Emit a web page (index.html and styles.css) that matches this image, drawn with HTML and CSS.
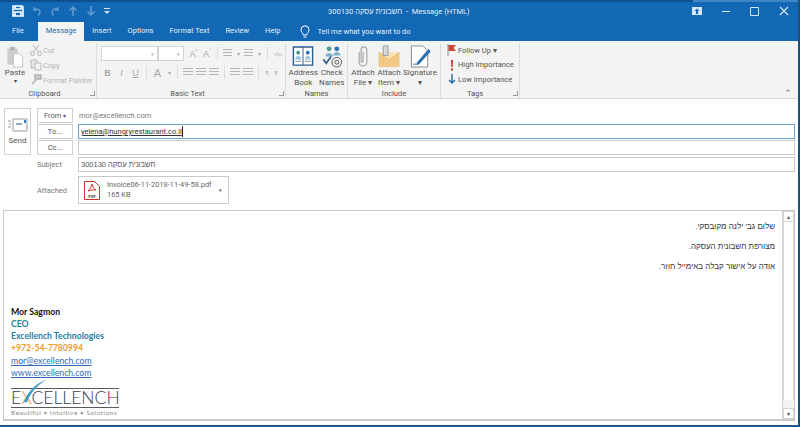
FILE: index.html
```html
<!DOCTYPE html>
<html lang="en">
<head>
    <meta charset="UTF-8">
    <title>Message (HTML)</title>
    <link rel="stylesheet" href="styles.css">
</head>
<body>
    <div class="window">
        <div class="titlebar">
            <div class="qat">
                <svg width="14" height="14" viewBox="0 0 14 14"><path d="M2 2h9l1 1v9H2z M4 2v3h6V2 M4 12V8h6v4" fill="none" stroke="#fff" stroke-width="1.6"/></svg>
                <svg class="dim" width="12" height="12" viewBox="0 0 12 12"><path d="M3 2v3h3M3 5c2-2 6-1 6 2 0 2-1 3-2 3" fill="none" stroke="#fff" stroke-width="1.3"/></svg>
                <svg class="dim" width="12" height="12" viewBox="0 0 12 12"><path d="M9 2v3H6M9 5C7 3 3 4 3 7c0 2 1 3 2 3" fill="none" stroke="#fff" stroke-width="1.3"/></svg>
                <svg class="dim" width="12" height="12" viewBox="0 0 12 12"><path d="M6 11V2M2.500 5.500 6 2l3.500 3.500" fill="none" stroke="#fff" stroke-width="1.500"/></svg>
                <svg class="dim" width="12" height="12" viewBox="0 0 12 12"><path d="M6 1v9M2.500 6.500 6 10l3.500-3.500" fill="none" stroke="#fff" stroke-width="1.500"/></svg>
                <svg class="more" width="8" height="12" viewBox="0 0 8 12"><path d="M1 3h6v1H1zM1 6h6L4 9z" fill="#cfe0f0"/></svg>
            </div>
            <div class="doc-title"><span dir="rtl">חשבונית עסקה 300130</span> &nbsp;-&nbsp; Message (HTML)</div>
            <div class="win-btns">
                <svg width="10" height="8" viewBox="0 0 10 8"><path d="M0 0h10v8H0z" fill="#d5e5f5"/><path d="M5 1.500 2.500 4H4v3h2V4h1.500z" fill="#1268b5"/></svg>
                <svg width="10" height="8" viewBox="0 0 10 8"><path d="M1 4.500h8" stroke="#d5e5f5"/></svg>
                <svg width="10" height="10" viewBox="0 0 10 10"><path d="M.5 1.500h8v8h-8z" fill="none" stroke="#d5e5f5"/></svg>
                <svg width="10" height="10" viewBox="0 0 10 10"><path d="M1 1l8 8M9 1l-8 8" stroke="#d5e5f5" stroke-width="1.100"/></svg>
            </div>
        </div>
        <div class="tabs">
            <span class="tab">File</span>
            <span class="tab active">Message</span>
            <span class="tab">Insert</span>
            <span class="tab">Options</span>
            <span class="tab">Format Text</span>
            <span class="tab">Review</span>
            <span class="tab">Help</span>
            <span class="tell">
                <svg width="10" height="14" viewBox="0 0 10 14"><path d="M3.300 10C3 8 1 7 1 4.800a4 4 0 0 1 8 0C9 7 7 8 6.700 10zM3.500 12h3" fill="none" stroke="#fff"/></svg>
                Tell me what you want to do
            </span>
        </div>

        <div class="ribbon">
            <div class="group clipboard">
                <div class="group-body clip-body">
                    <div class="paste">
                        <svg width="18" height="22" viewBox="0 0 20 26"><path d="M1 3h12v19H1z" fill="#cfcdcb"/><path d="M4 1h6v4H4z" fill="#b5b3b1"/><path d="M8 9h7l4 4v12H8z" fill="#fff" stroke="#b9b9b9"/></svg>
                        <span class="big-label dark">Paste</span>
                        <span class="caret dark">▾</span>
                    </div>
                    <div class="clip-list">
                        <span class="clip-item"><svg width="12" height="12" viewBox="0 0 12 12"><path d="M3 1l6 7M9 1 3 8" stroke="#b5b5b5"/><circle cx="2.500" cy="9.500" r="2" fill="none" stroke="#b5b5b5"/><circle cx="9.500" cy="9.500" r="2" fill="none" stroke="#b5b5b5"/></svg>Cut</span>
                        <span class="clip-item"><svg width="12" height="12" viewBox="0 0 12 12"><path d="M1 1h6v8H1z" fill="#e4e4e4" stroke="#bbb"/><path d="M5 4h6v7H5z" fill="#f3f3f3" stroke="#bbb"/></svg>Copy</span>
                        <span class="clip-item"><svg width="12" height="12" viewBox="0 0 12 12"><path d="M5 1h6v4H5zM7 5 2 10" stroke="#b5b5b5" stroke-width="1.600" fill="#ccc"/></svg>Format Painter</span>
                    </div>
                </div>
                <div class="group-label">Clipboard<i class="launcher"></i></div>
            </div>

            <div class="group basic">
                <div class="group-body basic-body">
                    <div class="basic-row">
                        <span class="combo font-name"><b>▾</b></span><span class="combo font-size"><b>▾</b></span>
                        <span class="tool">A<sup>^</sup></span><span class="tool">A<sup>ˇ</sup></span>
                        <span class="sep"></span>
                        <span class="tool lines"></span><span class="tool small">▾</span><span class="tool lines"></span><span class="tool small">▾</span>
                        <span class="sep"></span>
                        <span class="tool small ghost">Ap</span>
                    </div>
                    <div class="basic-row">
                        <span class="tool bold">B</span><span class="tool ital">I</span><span class="tool under">U</span>
                        <span class="sep"></span>
                        <span class="tool big">A</span><span class="tool small">▾</span>
                        <span class="sep"></span>
                        <span class="tool lines"></span><span class="tool lines"></span><span class="tool lines"></span>
                        <span class="sep"></span>
                        <span class="tool lines"></span><span class="tool lines"></span>
                        <span class="sep"></span>
                        <span class="tool small">¶</span><span class="tool small">¶</span>
                    </div>
                </div>
                <div class="group-label">Basic Text<i class="launcher"></i></div>
            </div>

            <div class="group names">
                <div class="group-body big-row">
                    <div class="big-btn">
                        <svg width="24" height="24" viewBox="0 0 24 24"><path d="M2 2h20v19H2z" fill="#fff" stroke="#2c5f93" stroke-width="1.500"/><path d="M12 2v19" stroke="#2c5f93"/><circle cx="7" cy="8" r="2" fill="#4a9a8c"/><circle cx="17" cy="8" r="2" fill="#2c6fb0"/><path d="M4 15c0-5 6-5 6 0zM14 15c0-5 6-5 6 0z" fill="#9cc6de"/><path d="M4 17h6M14 17h6" stroke="#888"/></svg>
                        <span class="big-label">Address<br>Book</span>
                    </div>
                    <div class="big-btn">
                        <svg width="24" height="24" viewBox="0 0 24 24"><circle cx="9" cy="4" r="2.500" fill="#4a9a8c"/><circle cx="17" cy="4" r="2.500" fill="#2c6fb0"/><path d="M5 12c0-5 8-5 8 0zM13 11c0-5 8-5 8 0z" fill="#7fb2cf"/><path d="M3 15l3 4 5-7" fill="none" stroke="#2c5f93" stroke-width="1.800"/><circle cx="17" cy="18" r="5" fill="none" stroke="#555"/><circle cx="17" cy="18" r="2" fill="none" stroke="#555"/></svg>
                        <span class="big-label">Check<br>Names</span>
                    </div>
                </div>
                <div class="group-label">Names</div>
            </div>

            <div class="group include">
                <div class="group-body big-row">
                    <div class="big-btn">
                        <svg width="24" height="24" viewBox="0 0 24 24"><path d="M8 7v11a4 4 0 0 0 8 0V5a3 3 0 0 0-6 0v12a1 1 0 0 0 2 0V7" fill="none" stroke="#a5a5a5" stroke-width="1.200"/></svg>
                        <span class="big-label">Attach<br>File ▾</span>
                    </div>
                    <div class="big-btn">
                        <svg width="24" height="24" viewBox="0 0 24 24"><path d="M1 8h22v15H1z" fill="#f1c987"/><path d="M1 8l11 8 11-8" fill="#f7dfae" stroke="#e0b26a"/><path d="M6 1h5v10H6z" fill="#d9d9d9" stroke="#999"/></svg>
                        <span class="big-label">Attach<br>Item ▾</span>
                    </div>
                    <div class="big-btn">
                        <svg width="24" height="24" viewBox="0 0 24 24"><path d="M3 1h12l5 5v17H3z" fill="#fff" stroke="#8a8a8a"/><path d="M21 4 9 18l-1 3 3-1L23 7z" fill="#2c6fb0"/><path d="M5 20h3" stroke="#2c5f93"/></svg>
                        <span class="big-label">Signature<br>▾</span>
                    </div>
                </div>
                <div class="group-label">Include</div>
            </div>

            <div class="group tags">
                <div class="group-body tag-list">
                    <span class="tag-item"><svg width="10" height="12" viewBox="0 0 10 12"><path d="M1 0v12" stroke="#888"/><path d="M1.500 1H9L6.500 4 9 7H1.500z" fill="#c8483a"/></svg>Follow Up ▾</span>
                    <span class="tag-item"><svg width="10" height="12" viewBox="0 0 10 12"><path d="M4 1h2l-.3 7H4.300zM4 9.500h2v2H4z" fill="#c8332a"/></svg>High Importance</span>
                    <span class="tag-item"><svg width="10" height="12" viewBox="0 0 10 12"><path d="M5 1v9M2 7l3 3 3-3" fill="none" stroke="#2c6fb0" stroke-width="1.500"/></svg>Low Importance</span>
                </div>
                <div class="group-label">Tags<i class="launcher"></i></div>
            </div>
            <span class="collapse">⌃</span>
        </div>

        <div class="compose">
            <div class="head">
                <div class="send">
                    <svg width="20" height="14" viewBox="0 0 20 14"><path d="M5 1h14v12H5z" fill="#fff" stroke="#9a9a9a"/><path d="M8 6h6" stroke="#6e8fae" stroke-width="1.500"/><path d="M0 3h3M1 6h2M0 9h3" stroke="#9a9a9a"/><path d="M16 2h2v3h-2z" fill="#3b7fbf"/></svg>
                    <span>Send</span>
                </div>
                <div class="fields">
                    <div class="field-row from-row">
                        <span class="addr-btn">From <b>▾</b></span>
                        <span class="from-val">mor@excellench.com</span>
                    </div>
                    <div class="field-row">
                        <span class="addr-btn">To...</span>
                        <div class="input focus"><span class="link-to">yelena@hungryrestaurant.co.il</span><i class="cursor"></i></div>
                    </div>
                    <div class="field-row">
                        <span class="addr-btn">Cc...</span>
                        <div class="input"></div>
                    </div>
                    <div class="field-row subject-row">
                        <span class="field-label">Subject</span>
                        <div class="input subject"><span dir="rtl">חשבונית עסקה 300130</span></div>
                    </div>
                    <div class="field-row attach-row">
                        <span class="field-label">Attached</span>
                        <div class="attachment">
                            <svg width="16" height="19" viewBox="0 0 16 19"><path d="M.5.500h10l5 5v13H.500z" fill="#fff" stroke="#c8332a"/><path d="M8 3c-.500 3-2 5-4 7 3-1 5-1.500 8-1-2-1-3.500-3-4-6z" fill="none" stroke="#c8332a"/><text x="8" y="16.500" class="pdf-text">PDF</text></svg>
                            <div class="att-text">
                                <span>Invoice06-11-2018-11-49-58.pdf</span>
                                <span>165 KB</span>
                            </div>
                            <b>▾</b>
                        </div>
                    </div>
                </div>
            </div>

            <div class="body-box">
                <div class="message">
                    <div class="hebrew" dir="rtl">
                        <p>שלום גב' ילנה מקובסקי.</p>
                        <p>מצורפת חשבונית העסקה.</p>
                        <p>אודה על אישור קבלה באימייל חוזר.</p>
                    </div>
                    <div class="signature">
                        <div class="sig-name">Mor Sagmon</div>
                        <div class="sig-teal">CEO</div>
                        <div class="sig-teal">Excellench Technologies</div>
                        <div class="sig-phone">+972-54-7780994</div>
                        <div class="sig-link">mor@excellench.com</div>
                        <div class="sig-link">www.excellench.com</div>
                        <div class="logo">
                            <svg class="swoosh" width="30" height="30" viewBox="0 0 30 30"><path d="M1 29C5 18 14 6 29 1 17 8 9 18 5 29z" fill="#3d9bc4"/></svg>
                            <div class="logo-word">E<em>X</em>CELLENCH</div>
                            <div class="logo-tag">Beautiful • Intuitive • Solutions</div>
                        </div>
                    </div>
                </div>
                <div class="scrollbar"><span class="arrow">▴</span><span class="track"></span><span class="arrow">▾</span></div>
            </div>
        </div>
    </div>
</body>
</html>
```

FILE: styles.css
```css
* {
    box-sizing: border-box;
}

html, body {
    margin: 0;
    height: 100%;
    overflow: hidden;
}

body {
    font-family: Roboto, "Liberation Sans", sans-serif;
    font-size: 8px;
    color: #444;
    background: #fff;
}

.window {
    height: 427px;
    width: 800px;
    display: flex;
    flex-direction: column;
    border-right: 2px solid #1d4f7d;
    border-bottom: 2px solid #1d5c96;
    background: #fff;
}

.titlebar {
    height: 20px;
    flex: none;
    background: linear-gradient(90deg, #0e4f8d 693px, #3f86c6 693px) top / 100% 2px no-repeat, #1268b5;
    padding-top: 2px;
    color: #e3eef8;
    display: flex;
    align-items: center;
}

.qat {
    display: flex;
    align-items: center;
    gap: 6px;
    padding-left: 11px;
    width: 250px;
}

.qat .dim {
    opacity: 0.35;
}

.doc-title {
    flex: 1;
    padding-left: 78px;
    font-size: 7.500px;
    white-space: nowrap;
}

.win-btns {
    display: flex;
    align-items: center;
    gap: 19px;
    padding-right: 9px;
}

.tabs {
    height: 21px;
    flex: none;
    background: #1268b5;
    display: flex;
    align-items: flex-end;
    padding-left: 4px;
    color: #e3eef8;
}

.tab {
    height: 19px;
    padding: 4px 8px 0;
    font-size: 7.500px;
    white-space: nowrap;
}

.tab.active {
    margin: 0 0 0 6px;
    background: #f3f3f3;
    color: #2a6fac;
}

.tell {
    display: flex;
    align-items: center;
    gap: 7px;
    margin-left: 12px;
    height: 19px;
    font-size: 7.500px;
    white-space: nowrap;
}

.ribbon {
    height: 58px;
    flex: none;
    background: #f3f3f3;
    border-bottom: 1px solid #d8d8d8;
    display: flex;
    position: relative;
}

.group {
    display: flex;
    flex-direction: column;
    border-right: 1px solid #dcdcdc;
    margin-top: 2px;
}

.group-body {
    flex: 1;
    min-height: 0;
}

.group-label {
    height: 10px;
    line-height: 11px;
    text-align: center;
    font-size: 7.500px;
    color: #555;
    position: relative;
}

.launcher {
    position: absolute;
    right: 1px;
    top: 3px;
    width: 5px;
    height: 5px;
    border-left: 1px solid #999;
    border-bottom: 1px solid #999;
    transform: rotate(-90deg);
}

.clipboard { width: 97px; }
.basic { width: 189px; }
.names { width: 62px; }
.include { width: 93px; }
.tags { width: 79px; }

.clipboard .group-label,
.basic .group-label {
    padding-right: 7px;
}

.tags .group-label {
    padding-right: 10px;
}

.clip-body {
    display: flex;
}

.paste {
    width: 30px;
    display: flex;
    flex-direction: column;
    align-items: center;
    padding-top: 3px;
}

.dark {
    color: #444;
}

.big-label {
    font-size: 8px;
    line-height: 10px;
    text-align: center;
    color: #555;
    white-space: nowrap;
}

.caret {
    font-size: 6px;
    line-height: 6px;
}

.clip-list {
    display: flex;
    flex-direction: column;
    gap: 3px;
    padding-top: 1px;
}

.clip-item {
    display: flex;
    align-items: center;
    gap: 1px;
    height: 12px;
    font-size: 7.500px;
    color: #b5b5b5;
    white-space: nowrap;
}

.basic-body {
    display: flex;
    flex-direction: column;
    gap: 4px;
    padding: 3px 0 0 4px;
}

.basic-row {
    display: flex;
    align-items: center;
    height: 15px;
    gap: 1px;
    white-space: nowrap;
}

.combo {
    height: 15px;
    background: #fff;
    border: 1px solid #d4d4d4;
    display: flex;
    justify-content: flex-end;
    align-items: center;
    padding-right: 3px;
    font-size: 5px;
    color: #aaa;
}

.combo b {
    font-weight: normal;
}

.font-name { width: 60px; }
.font-size { width: 27px; margin-left: -1px; margin-right: 3px; }

.tool {
    width: 13px;
    text-align: center;
    font-size: 9px;
    color: #a8a8a8;
    font-family: "Liberation Sans", sans-serif;
}

.tool sup {
    font-size: 5px;
    line-height: 0;
}

.tool.small {
    width: 8px;
    font-size: 6px;
}

.tool.ghost {
    width: 14px;
    opacity: 0.7;
}

.tool.bold { font-weight: bold; }
.tool.ital { font-style: italic; }
.tool.under { text-decoration: underline; }
.tool.big { font-size: 11px; }

.tool.lines {
    height: 9px;
    background: repeating-linear-gradient(#b5b5b5 0 1px, transparent 1px 3px);
    margin: 0 1px;
    width: 10px;
}

.sep {
    width: 1px;
    height: 13px;
    background: #dcdcdc;
    margin: 0 3px;
}

.big-row {
    display: flex;
    justify-content: space-around;
    padding: 2px 2px 0;
}

.big-btn {
    display: flex;
    flex-direction: column;
    align-items: center;
    gap: 0;
}

.tag-list {
    display: flex;
    flex-direction: column;
    gap: 2.500px;
    padding: 1px 0 0 6px;
}

.tag-item {
    display: flex;
    align-items: center;
    gap: 1px;
    height: 12px;
    font-size: 7.500px;
    color: #555;
    white-space: nowrap;
}

.collapse {
    position: absolute;
    right: 6px;
    bottom: 0;
    font-size: 9px;
    line-height: 9px;
    color: #666;
}

.compose {
    flex: 1;
    min-height: 0;
    display: flex;
    flex-direction: column;
    padding: 9px 3px 4px 3px;
}

.head {
    display: flex;
    align-items: flex-start;
    height: 102px;
    flex: none;
}

.send {
    width: 27px;
    height: 47px;
    margin: 0 6px 0 1px;
    border: 1px solid #d0d0d0;
    display: flex;
    flex-direction: column;
    align-items: center;
    gap: 4px;
    padding-top: 9px;
    font-size: 8px;
    color: #555;
}

.fields {
    flex: 1;
    min-width: 0;
    display: flex;
    flex-direction: column;
    gap: 1px;
}

.field-row {
    display: flex;
    align-items: center;
    height: 15px;
}

.addr-btn {
    width: 36px;
    height: 15px;
    margin-right: 5px;
    border: 1px solid #d0d0d0;
    text-align: center;
    line-height: 13px;
    font-size: 7.500px;
    color: #555;
}

.addr-btn b {
    font-size: 6px;
    font-weight: normal;
}

.from-val {
    font-size: 7.500px;
    color: #777;
    margin-left: 1px;
}

.input {
    flex: 1;
    height: 15px;
    border: 1px solid #c9c9c9;
    display: flex;
    align-items: center;
    padding-left: 2px;
    font-size: 7.500px;
    color: #555;
    font-family: "Liberation Sans", sans-serif;
}

.input.focus {
    border-color: #6aa3cf;
}

.link-to {
    color: #333;
    font-family: Roboto, sans-serif;
    text-decoration: underline;
}

.cursor {
    width: 1px;
    height: 11px;
    background: #222;
}

.field-label {
    width: 41px;
    font-size: 7.500px;
    color: #777;
}

.subject-row {
    margin-top: 1px;
}

.attach-row {
    height: 28px;
    margin-top: 3px;
}

.attachment {
    width: 151px;
    height: 28px;
    border: 1px solid #c9c9c9;
    display: flex;
    align-items: center;
    padding-left: 5px;
    gap: 7px;
    color: #666;
}

.pdf-text {
    font-size: 4px;
    font-weight: bold;
    text-anchor: middle;
    fill: #444;
}

.attachment > b {
    font-size: 5px;
    font-weight: normal;
    color: #444;
}

.att-text {
    display: flex;
    flex-direction: column;
    font-size: 7.400px;
    line-height: 10px;
    white-space: nowrap;
}

.body-box {
    flex: 1;
    min-height: 0;
    border: 1px solid #c9c9c9;
    border-bottom-width: 2px;
    display: flex;
}

.message {
    flex: 1;
    display: flex;
    flex-direction: column;
    justify-content: space-between;
    padding: 0 0 2px 7px;
}

.hebrew {
    font-family: "Liberation Sans", sans-serif;
    font-size: 8px;
    color: #333;
    padding: 10px 7px 0 0;
}

.hebrew p {
    margin: 0 0 9px;
    line-height: 11px;
}

.signature {
    font-family: Lato, "Liberation Sans", sans-serif;
    font-size: 8.700px;
    line-height: 12.200px;
    font-weight: bold;
}

.sig-name { color: #111; }
.sig-teal { color: #1f7fa0; }
.sig-phone { color: #ed9b2c; }

.sig-link {
    color: #2f6cb5;
    font-weight: normal;
    text-decoration: underline;
}

.logo {
    width: 108px;
    position: relative;
    padding-top: 9px;
    font-weight: normal;
}

.swoosh {
    position: absolute;
    left: 12px;
    top: 0;
    width: 24px;
    height: 24px;
}

.logo-word {
    border-top: 1px solid #5a5a5a;
    border-bottom: 1px solid #5a5a5a;
    height: 20px;
    font-size: 17.500px;
    font-weight: 300;
    line-height: 18px;
    color: #33414e;
    white-space: nowrap;
}

.logo-word em {
    font-style: normal;
    color: #e08a2a;
}

.logo-tag {
    font-size: 6.500px;
    line-height: 9px;
    letter-spacing: 0.500px;
    color: #8a8a8a;
    white-space: nowrap;
}

.scrollbar {
    width: 12px;
    border-left: 1px solid #d0d0d0;
    display: flex;
    flex-direction: column;
    background: #f3f3f3;
    font-size: 6px;
    color: #555;
    text-align: center;
}

.arrow {
    height: 11px;
    line-height: 10px;
    background: #fff;
    border: 1px solid #d5d5d5;
}

.track {
    flex: 1;
    background: #fff;
    border-left: 1px solid #d5d5d5;
    border-right: 1px solid #d5d5d5;
    margin-bottom: 8px;
}
```
